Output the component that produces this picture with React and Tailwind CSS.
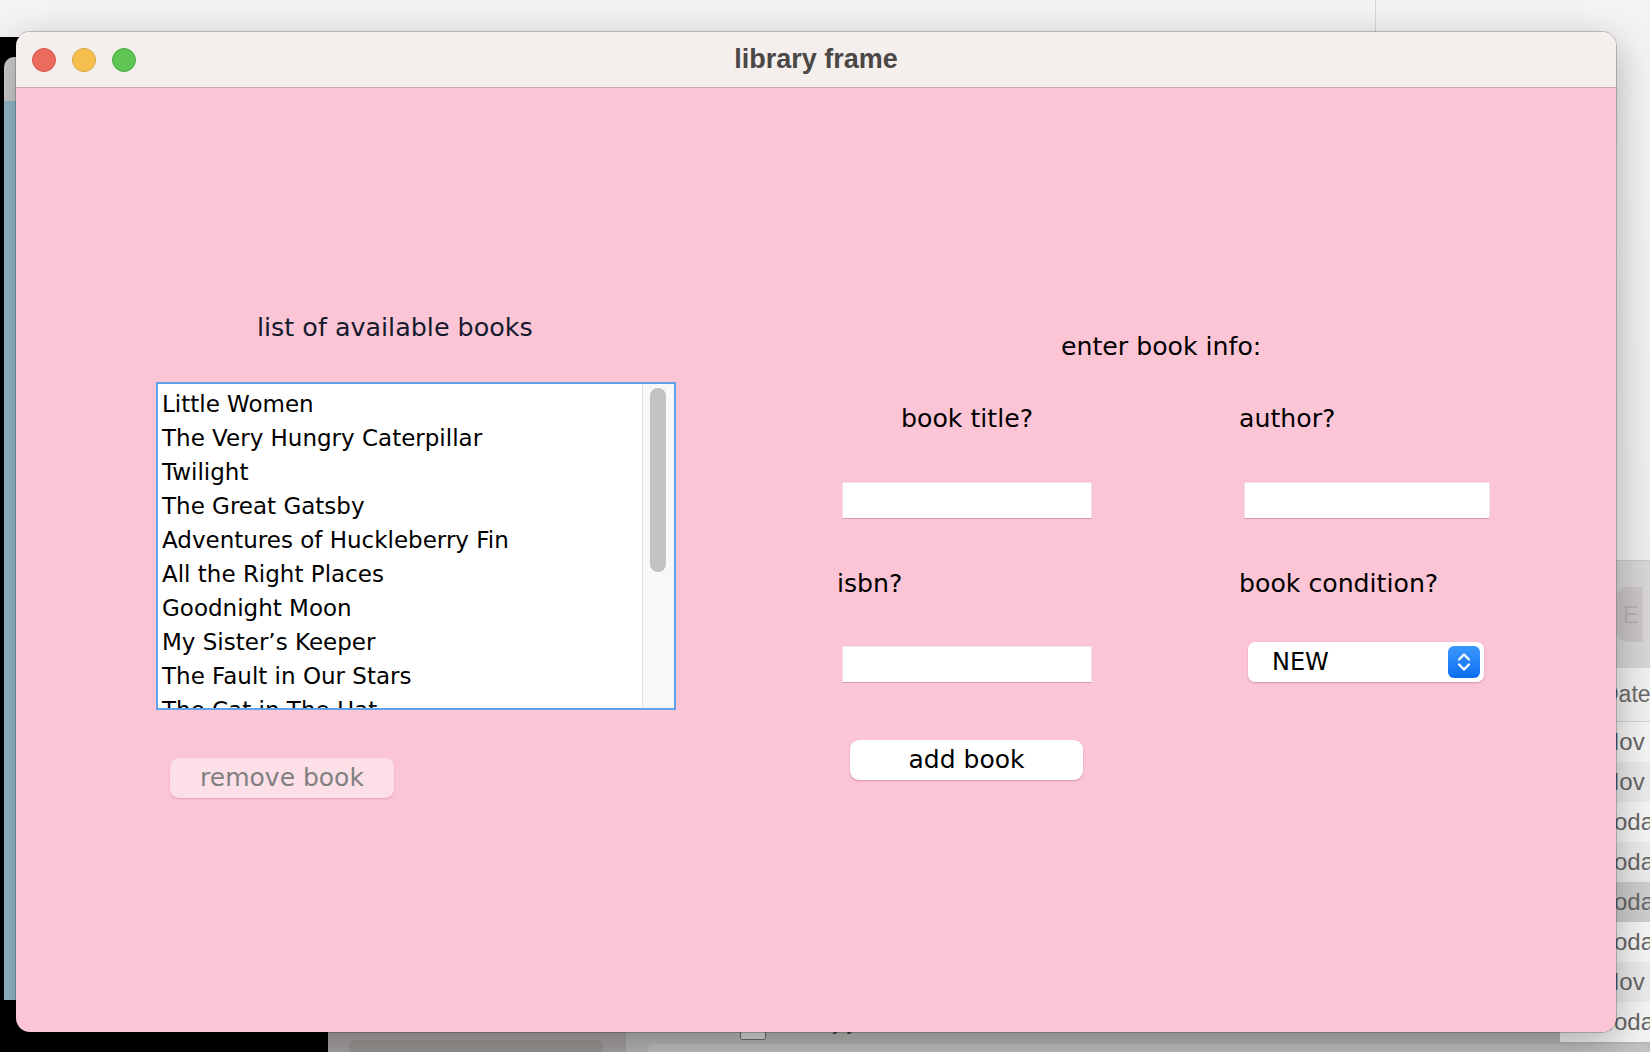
const books = [
  "Little Women",
  "The Very Hungry Caterpillar",
  "Twilight",
  "The Great Gatsby",
  "Adventures of Huckleberry Fin",
  "All the Right Places",
  "Goodnight Moon",
  "My Sister’s Keeper",
  "The Fault in Our Stars",
  "The Cat in The Hat",
];

const finderRows = [
  { label: "Nov", bg: "bg-[#f5f5f5]" },
  { label: "Nov", bg: "bg-[#ebebeb]" },
  { label: "Today", bg: "bg-[#f5f5f5]" },
  { label: "Today", bg: "bg-[#ebebeb]" },
  { label: "Today", bg: "bg-[#cdcdcd]" },
  { label: "Today", bg: "bg-[#f5f5f5]" },
  { label: "Nov", bg: "bg-[#ebebeb]" },
  { label: "Today", bg: "bg-[#f5f5f5]" },
];

const TextField = ({ width }) => (
  <div className={`${width} h-[37px] bg-white border border-[#f1dfe4] border-b-[#cf9dab]`} />
);

const Desktop = () => (
  <>
    <div className="absolute left-[1375px] top-0 w-px h-[32px] bg-[#d6d6d6]" />
    <div className="absolute left-0 top-[37px] w-[40px] h-[1015px] bg-black">
      <div className="absolute left-[4px] top-[20px] w-[36px] h-[44px] rounded-tl-[10px] bg-[#d0cfcf]" />
      <div className="absolute left-[4px] top-[64px] w-[36px] h-[907px] bg-[#94bcca]" />
    </div>
    <div className="absolute left-0 top-[1000px] w-[328px] h-[52px] bg-black" />
    <div className="absolute left-[328px] top-[1000px] w-[298px] h-[52px] bg-[#a8a5a3]">
      <div className="absolute left-[21px] top-[40px] w-[254px] h-[30px] rounded-[8px] bg-[#9b9896]" />
    </div>
    <div className="absolute left-[626px] top-[1000px] w-[1024px] h-[52px] bg-[#b9b9b7]">
      <div className="absolute left-[114px] top-[14px] w-[26px] h-[26px] rounded-[2px] border border-[#6f6f6f] bg-[#d8d8d8]" />
      <span className="absolute left-[150px] top-[8px] text-[22px] leading-[28px] text-[#3a3a3a] font-['Liberation_Sans',sans-serif]">
        Library.jav
      </span>
      <div className="absolute left-[21px] top-[44px] w-[1003px] h-[30px] rounded-[8px] bg-[#c3c3c1]" />
    </div>
    <div className="absolute left-[1560px] top-[560px] w-[90px] h-[492px] flex flex-col font-['Liberation_Sans',sans-serif]">
      <div className="h-[107px] bg-[#d9d7d6] border-t border-[#c9c7c6] pl-[57px] pt-[26px]">
        <div className="w-[26px] h-[55px] rounded-l-[10px] bg-[#cac7c6] flex items-center pl-[6px] text-[24px] text-[#b5b2b1]">
          E
        </div>
      </div>
      <div className="h-[55px] bg-[#f1f1f1] border-y border-[#d2d2d2] flex items-center pl-[42px] text-[23px] text-[#6a6a6a]">
        Date
      </div>
      {finderRows.map((row, i) => (
        <div
          key={i}
          className={`h-[40px] ${row.bg} flex items-center pl-[42px] text-[24px] text-[#666]`}
        >
          {row.label}
        </div>
      ))}
    </div>
  </>
);

const TitleBar = () => (
  <div className="relative h-[56px] shrink-0 bg-[#f4efed] border-b border-[#d8a8b5] flex items-center">
    <div className="flex items-center gap-[16px] pl-[16px]">
      <span className="w-[24px] h-[24px] rounded-full bg-[#ed6a5e] border border-[#d5584c]" />
      <span className="w-[24px] h-[24px] rounded-full bg-[#f5bf4f] border border-[#d9a33c]" />
      <span className="w-[24px] h-[24px] rounded-full bg-[#61c554] border border-[#4eaa41]" />
    </div>
    <div className="absolute inset-x-0 top-0 h-[56px] flex items-center justify-center pointer-events-none">
      <span className="-mt-[3px] text-[27px] leading-[30px] font-bold text-[#4b4747] font-['Liberation_Sans',sans-serif]">
        library frame
      </span>
    </div>
  </div>
);

const BookList = () => (
  <div className="w-[520px] flex flex-col">
    <div className="mt-[224px] ml-[101px] text-[25.4px] leading-[30px] text-[#151a2e] whitespace-nowrap">
      list of available books
    </div>
    <div className="mt-[40px] h-[328px] border-2 border-[#5ea3ea] bg-white flex overflow-hidden">
      <div className="flex-1 overflow-hidden pt-[3px] pl-[4px]">
        {books.map((title) => (
          <div key={title} className="text-[23px] leading-[34px] text-black whitespace-nowrap">
            {title}
          </div>
        ))}
      </div>
      <div className="w-[32px] bg-[#f8f8f8] border-l border-[#e3e3e3] pt-[4px] pl-[7px]">
        <div className="w-[16px] h-[184px] rounded-full bg-[#c3c3c3]" />
      </div>
    </div>
    <button className="mt-[48px] ml-[14px] w-[224px] h-[40px] rounded-[9px] bg-[#fde0e7] text-[25px] text-[#808080] shadow-[0_1px_2px_rgba(120,60,80,0.25)] flex items-center justify-center">
      remove book
    </button>
  </div>
);

const BookForm = () => (
  <div className="ml-[160px] flex flex-col text-[25.2px] leading-[30px] text-black">
    <div className="mt-[244px] ml-[225px] whitespace-nowrap">enter book info:</div>
    <div className="mt-[42px] flex">
      <div className="w-[403px] pl-[65px]">book title?</div>
      <div>author?</div>
    </div>
    <div className="mt-[48px] flex">
      <div className="w-[403px] pl-[6px]">
        <TextField width="w-[250px]" />
      </div>
      <div className="pl-[5px]">
        <TextField width="w-[246px]" />
      </div>
    </div>
    <div className="mt-[50px] flex">
      <div className="w-[403px] pl-[1px]">isbn?</div>
      <div className="whitespace-nowrap">book condition?</div>
    </div>
    <div className="mt-[43px] flex">
      <div className="w-[403px] pl-[6px] pt-[4px]">
        <TextField width="w-[250px]" />
      </div>
      <div className="pl-[9px]">
        <div className="w-[236px] h-[40px] rounded-[7px] bg-white shadow-[0_1px_2px_rgba(120,60,80,0.35)] flex items-center pl-[24px] pr-[4px]">
          <span className="text-[24px]">NEW</span>
          <span className="ml-auto w-[32px] h-[32px] rounded-[6px] bg-gradient-to-b from-[#3b98fd] to-[#0a6cf1] flex items-center justify-center">
            <svg width="32" height="32" viewBox="0 0 32 32" fill="none" stroke="white" strokeWidth="2.3" strokeLinecap="round" strokeLinejoin="round">
              <path d="M11 13.5 L16 8.5 L21 13.5" />
              <path d="M11 18.5 L16 23.5 L21 18.5" />
            </svg>
          </span>
        </div>
      </div>
    </div>
    <button className="mt-[57px] ml-[14px] w-[233px] h-[40px] rounded-[9px] bg-white shadow-[0_1px_2px_rgba(120,60,80,0.35)] flex items-center justify-center text-[25px]">
      add book
    </button>
  </div>
);

export default function App() {
  return (
    <div className="relative w-[1650px] h-[1052px] overflow-hidden bg-gradient-to-b from-[#f4f4f4] to-[#e9e9e9] font-['DejaVu_Sans',sans-serif]">
      <Desktop />
      <div className="absolute left-[16px] top-[32px] w-[1600px] h-[1000px] rounded-[14px] overflow-hidden flex flex-col ring-1 ring-black/20 shadow-[0_12px_40px_rgba(0,0,0,0.3)]">
        <TitleBar />
        <div className="flex-1 bg-[#fcc5d5] flex pl-[140px]">
          <BookList />
          <BookForm />
        </div>
      </div>
    </div>
  );
}
